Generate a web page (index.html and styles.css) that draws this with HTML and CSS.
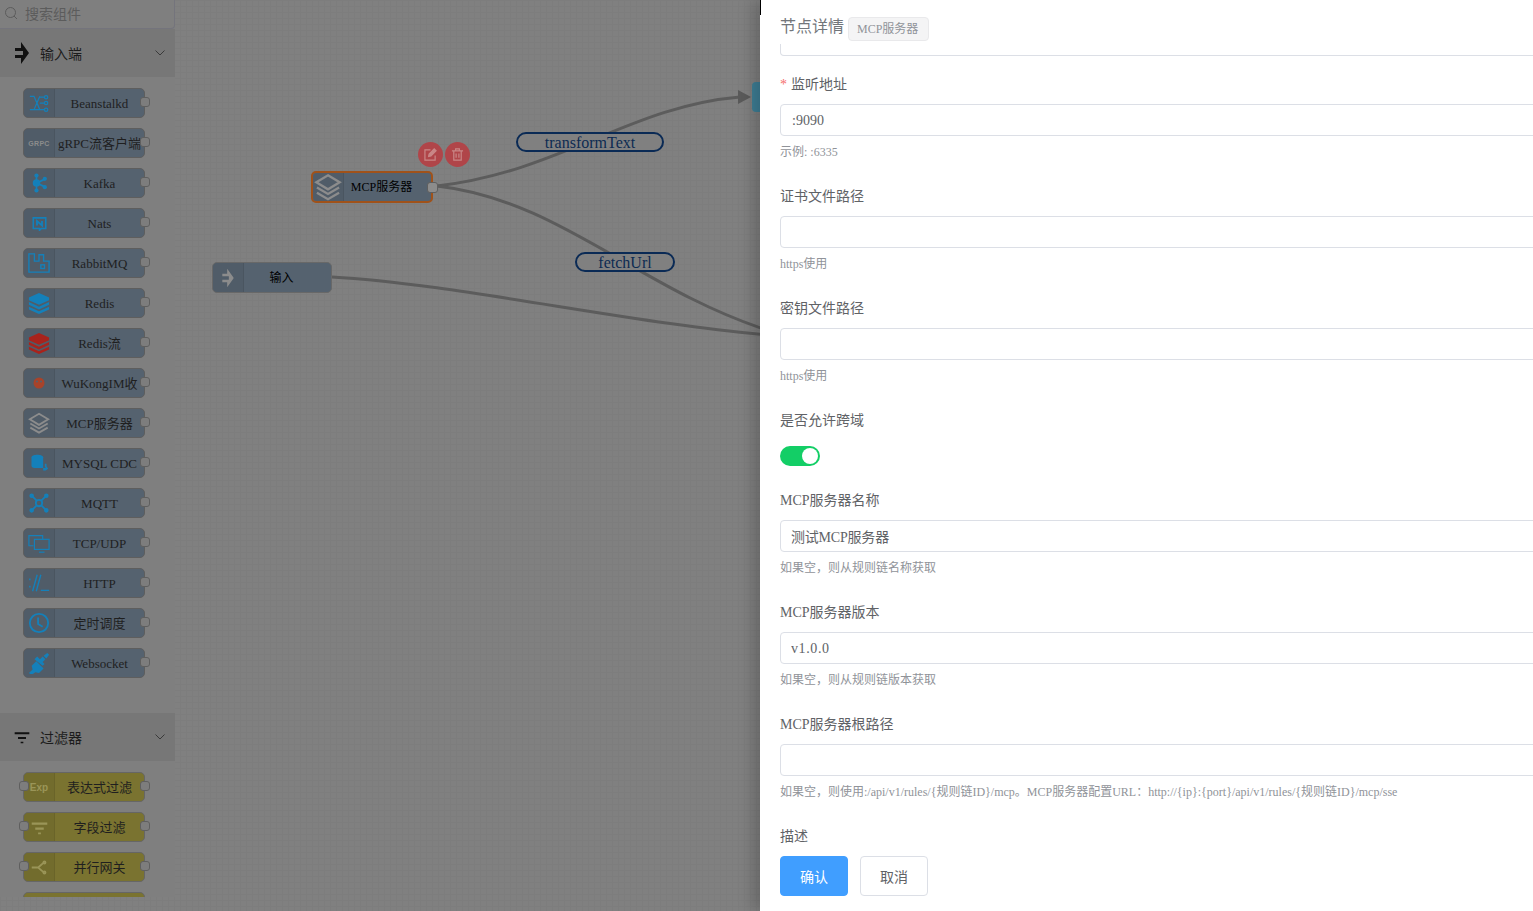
FILE: index.html
```html
<!DOCTYPE html>
<html lang="zh-CN">
<head>
  <meta charset="UTF-8" />
  <title>规则链编辑</title>
  <link rel="stylesheet" href="styles.css">
</head>
<body>
  <svg class="defs" width="0" height="0">
    <symbol id="i-stack" viewBox="0 0 24 24">
      <path d="M12 2 22 8 12 14 2 8Z" fill="none" stroke="currentColor" stroke-width="2"/>
      <path d="M2.500 12.500 12 18 21.500 12.500M2.500 17 12 22.500 21.500 17" fill="none" stroke="currentColor" stroke-width="2"/>
    </symbol>
    <symbol id="i-input" viewBox="0 0 14 24">
      <path d="M0 7h6V1l8 11-8 11v-6H0v-3h8v-4H0Z" fill="currentColor"/>
    </symbol>
    <symbol id="i-filter" viewBox="0 0 24 24">
      <path d="M1 5h22v3H1ZM6 12h12v3H6ZM10 19h4v2.500h-4Z" fill="currentColor"/>
    </symbol>
  </svg>

  <div class="stage">
    <aside class="sidebar">
      <div class="search">
        <svg width="14" height="14" viewBox="0 0 14 14"><circle cx="6.500" cy="6.500" r="5" fill="none" stroke="currentColor"/><path d="M10 10l3 3" stroke="currentColor"/></svg>
        <span>搜索组件</span>
      </div>

      <div class="group-head">
        <svg class="group-icon" viewBox="0 0 14 24"><use href="#i-input"/></svg>
        <span>输入端</span>
        <svg class="chevron" viewBox="0 0 10 6"><path d="M.5.500 5 5 9.500.500" fill="none" stroke="currentColor"/></svg>
      </div>
      <div class="group-list inputs">
        <div class="node"><div class="icon c-blue"><svg viewBox="0 0 24 24" fill="none" stroke="currentColor" stroke-width="1.500"><path d="M1 4h5l7 16H1M1 20h5l7-16M13 12h5M13 5h5M13 20h5"/><circle cx="20.500" cy="5" r="2"/><circle cx="20.500" cy="12" r="2"/><circle cx="20.500" cy="20" r="2"/></svg></div><div class="label">Beanstalkd</div><i class="port right"></i></div>
        <div class="node"><div class="icon c-grey"><b class="grpc">GRPC</b></div><div class="label">gRPC流客户端</div><i class="port right"></i></div>
        <div class="node"><div class="icon c-blue"><svg viewBox="0 0 24 24" fill="currentColor"><circle cx="9" cy="12" r="4.500"/><circle cx="9" cy="3" r="2.500"/><circle cx="9" cy="21" r="2.500"/><circle cx="19" cy="7" r="2.500"/><circle cx="19" cy="17" r="2.500"/><path d="M8 3h2v18H8ZM9 11l10-5 1 2-10 5ZM9 13l10 5 1-2-10-5Z"/></svg></div><div class="label">Kafka</div><i class="port right"></i></div>
        <div class="node"><div class="icon c-blue small-ish"><svg viewBox="0 0 24 24" fill="none" stroke="currentColor" stroke-width="2.500"><path d="M2 3h20v17h-7l-3 3v-3H2Z"/><path d="M8 15V8l8 7V8" stroke-width="3"/></svg></div><div class="label">Nats</div><i class="port right"></i></div>
        <div class="node"><div class="icon c-blue big"><svg viewBox="0 0 24 24" fill="none" stroke="currentColor" stroke-width="1.500"><path d="M1 22V2h6v8h5V3h5v7h6v12Z"/><rect x="14" y="14" width="4" height="4"/></svg></div><div class="label">RabbitMQ</div><i class="port right"></i></div>
        <div class="node"><div class="icon c-blue big"><svg viewBox="0 0 24 24" fill="currentColor"><path d="M12 1 23 6v3L12 14 1 9V6ZM1 11l11 5 11-5v3L12 19 1 14ZM1 16l11 5 11-5v3l-11 5L1 19Z"/></svg></div><div class="label">Redis</div><i class="port right"></i></div>
        <div class="node"><div class="icon c-red big"><svg viewBox="0 0 24 24" fill="currentColor"><path d="M12 1 23 6v3L12 14 1 9V6ZM1 11l11 5 11-5v3L12 19 1 14ZM1 16l11 5 11-5v3l-11 5L1 19Z"/></svg></div><div class="label">Redis流</div><i class="port right"></i></div>
        <div class="node"><div class="icon c-orange small"><svg viewBox="0 0 24 24"><circle cx="12" cy="12" r="11" fill="currentColor"/><circle cx="8" cy="9" r="2" fill="#55626f"/><circle cx="16" cy="9" r="2" fill="#55626f"/></svg></div><div class="label">WuKongIM收</div><i class="port right"></i></div>
        <div class="node"><div class="icon c-grey big"><svg viewBox="0 0 24 24"><use href="#i-stack"/></svg></div><div class="label">MCP服务器</div><i class="port right"></i></div>
        <div class="node"><div class="icon c-blue"><svg viewBox="0 0 24 24" fill="currentColor"><path d="M3 5c0-4 14-4 14 0v13H7c-3 0-4-1-4-3Z"/><path d="M17 18h3l-1-2v-3h2v3l2 3-3 2h-3Z"/></svg></div><div class="label">MYSQL CDC</div><i class="port right"></i></div>
        <div class="node"><div class="icon c-blue big"><svg viewBox="0 0 24 24" fill="none" stroke="currentColor" stroke-width="2"><circle cx="12" cy="12" r="3.500"/><path d="M4 4l5.500 5.500M20 4l-5.500 5.500M4 20l5.500-5.500M20 20l-5.500-5.500"/><circle cx="4" cy="4" r="1.500" fill="currentColor"/><circle cx="20" cy="4" r="1.500" fill="currentColor"/><circle cx="4" cy="20" r="1.500" fill="currentColor"/><circle cx="20" cy="20" r="1.500" fill="currentColor"/></svg></div><div class="label">MQTT</div><i class="port right"></i></div>
        <div class="node"><div class="icon c-blue big"><svg viewBox="0 0 24 24" fill="none" stroke="currentColor" stroke-width="1.300"><path d="M6 15H1V4h15v4"/><rect x="7" y="8" width="16" height="11"/><path d="M12 22h6"/></svg></div><div class="label">TCP/UDP</div><i class="port right"></i></div>
        <div class="node"><div class="icon c-blue big"><svg viewBox="0 0 24 24" fill="none" stroke="currentColor" stroke-width="1.500"><path d="M2 7v2M2 15v2M10 3 5 21M14 3 9 21M14 20h9"/></svg></div><div class="label">HTTP</div><i class="port right"></i></div>
        <div class="node"><div class="icon c-blue big"><svg viewBox="0 0 24 24" fill="none" stroke="currentColor" stroke-width="2"><circle cx="12" cy="12" r="10"/><path d="M11 6v7l5 3"/></svg></div><div class="label">定时调度</div><i class="port right"></i></div>
        <div class="node"><div class="icon c-blue big"><svg viewBox="0 0 24 24" fill="currentColor"><path d="M1 23l4-4-1-4 5-5 8 8-5 5-4-1-4 3ZM7 8l3-3 3 3 3-3 3 3-3 3 2 2-2 2-9-7Z"/><path d="M17 4l4-3 2 2-3 4Z"/></svg></div><div class="label">Websocket</div><i class="port right"></i></div>
      </div>

      <div class="group-head">
        <svg class="group-icon wide" viewBox="0 0 24 24"><use href="#i-filter"/></svg>
        <span>过滤器</span>
        <svg class="chevron" viewBox="0 0 10 6"><path d="M.5.500 5 5 9.500.500" fill="none" stroke="currentColor"/></svg>
      </div>
      <div class="group-list">
        <div class="node yellow"><i class="port left"></i><div class="icon c-pale"><b>Exp</b></div><div class="label">表达式过滤</div><i class="port right"></i></div>
        <div class="node yellow"><i class="port left"></i><div class="icon c-pale big"><svg viewBox="0 0 24 24"><use href="#i-filter"/></svg></div><div class="label">字段过滤</div><i class="port right"></i></div>
        <div class="node yellow"><i class="port left"></i><div class="icon c-pale big"><svg viewBox="0 0 24 24" fill="none" stroke="currentColor" stroke-width="2.500"><path d="M1 12h9l8-7M10 12l8 7"/><circle cx="19" cy="5" r="1.500"/><circle cx="19" cy="19" r="1.500"/></svg></div><div class="label">并行网关</div><i class="port right"></i></div>
        <div class="node yellow"></div>
      </div>
    </aside>

    <svg class="edges" width="800" height="911" viewBox="0 0 800 911">
      <g fill="none" stroke="#5c5c5c" stroke-width="3">
        <path d="M437 186C560 172 630 106 740 97"/>
        <path d="M437 186C560 200 640 290 770 331"/>
        <path d="M332 277C450 283 640 325 770 335"/>
      </g>
      <path d="M738 90 751 97 738 104Z" fill="#5a5a5a"/>
    </svg>

    <div class="edge-label label-transform">transformText</div>
    <div class="edge-label label-fetch">fetchUrl</div>

    <div class="actions">
      <span class="action"><svg width="13" height="13" viewBox="0 0 14 14" fill="none" stroke="currentColor" stroke-width="1.300"><path d="M12 8v5H1V2h6"/><path d="M5 9l.5-2.500L11 1l2 2-5.500 5.500Z" fill="currentColor"/></svg></span>
      <span class="action"><svg width="13" height="13" viewBox="0 0 14 14" fill="none" stroke="currentColor" stroke-width="1.300"><path d="M1 3h12M5 3V1h4v2M3 3v10h8V3M5.500 6v4.500M8.500 6v4.500"/></svg></span>
    </div>

    <div class="node canvas-node mcp"><div class="icon c-grey big"><svg viewBox="0 0 24 24"><use href="#i-stack"/></svg></div><div class="label">MCP服务器</div><i class="port right"></i></div>
    <div class="node canvas-node start"><div class="icon c-grey"><svg viewBox="0 0 14 24"><use href="#i-input"/></svg></div><div class="label">输入</div></div>
    <div class="canvas-node fragment"></div>
  </div>

  <section class="drawer">
    <i class="tick"></i>
    <header class="drawer-head">
      <span class="drawer-title">节点详情</span>
      <span class="tag">MCP服务器</span>
    </header>
    <form class="form">
      <div class="clipped-input"></div>

      <div class="item">
        <label class="required">监听地址</label>
        <input type="text" value=":9090">
        <p class="help">示例: :6335</p>
      </div>
      <div class="item">
        <label>证书文件路径</label>
        <input type="text">
        <p class="help">https使用</p>
      </div>
      <div class="item">
        <label>密钥文件路径</label>
        <input type="text">
        <p class="help">https使用</p>
      </div>
      <div class="item">
        <label>是否允许跨域</label>
        <div class="switch-row"><span class="switch"></span></div>
      </div>
      <div class="item">
        <label>MCP服务器名称</label>
        <input type="text" class="tight" value="测试MCP服务器">
        <p class="help">如果空，则从规则链名称获取</p>
      </div>
      <div class="item">
        <label>MCP服务器版本</label>
        <input type="text" class="loose" value="v1.0.0">
        <p class="help">如果空，则从规则链版本获取</p>
      </div>
      <div class="item">
        <label>MCP服务器根路径</label>
        <input type="text">
        <p class="help">如果空，则使用:/api/v1/rules/{规则链ID}/mcp。MCP服务器配置URL：http://{ip}:{port}/api/v1/rules/{规则链ID}/mcp/sse</p>
      </div>
      <div class="item last">
        <label>描述</label>
      </div>
      <div class="buttons">
        <button type="button" class="primary">确认</button>
        <button type="button">取消</button>
      </div>
    </form>
  </section>
</body>
</html>
```

FILE: styles.css
```css
* {
  box-sizing: border-box;
}
body {
  margin: 0;
  height: 911px;
  display: flex;
  overflow: hidden;
  background: #fff;
  font-family: "Liberation Serif", "Noto Sans CJK SC", serif;
}
.defs {
  position: absolute;
}

/* canvas side, already dimmed by the drawer's mask */
.stage {
  position: relative;
  flex: 0 0 760px;
  height: 911px;
  overflow: hidden;
  background-color: #808080;
  background-image:
    linear-gradient(#7d7d7d 1px, transparent 1px),
    linear-gradient(90deg, #7d7d7d 1px, transparent 1px);
  background-size: 6px 6px;
}
.sidebar {
  position: relative;
  z-index: 2;
  width: 175px;
  height: 897px;
  overflow: hidden;
  background: #7f7f7f;
}
.search {
  height: 29px;
  padding: 0 0 3px 4px;
  display: flex;
  align-items: center;
  gap: 7px;
  color: #5c5c5c;
  font-size: 14px;
  border: 1px solid #74747c;
  border-width: 0 1px 1px 0;
  border-radius: 0 0 4px 0;
}
.group-head {
  height: 48px;
  padding: 0 10px 0 15px;
  display: flex;
  align-items: center;
  background: #777;
  color: #1c1c1c;
  font-size: 14px;
}
.group-icon {
  width: 14px;
  height: 24px;
  margin-right: 11px;
  color: #111;
  flex: none;
}
.group-icon.wide {
  width: 16px;
  height: 16px;
  margin: 0 10px 0 -1px;
}
.chevron {
  width: 10px;
  height: 6px;
  margin-left: auto;
  color: #3a3a3a;
}
.group-list {
  padding: 11px 0 0 23px;
  display: flex;
  flex-direction: column;
  gap: 10px;
}
.group-list.inputs {
  padding-bottom: 35px;
}

/* nodes */
.node {
  position: relative;
  flex: none;
  width: 122px;
  height: 30px;
  display: flex;
  background: #55626f;
  border: 1px solid #5e5e5e;
  border-radius: 5px;
  color: #1f1f1f;
  font-size: 13px;
}
.node.yellow {
  background: #7a7330;
  border-color: #666;
}
.icon {
  flex: 0 0 31px;
  display: flex;
  align-items: center;
  justify-content: center;
  background: rgba(0, 0, 0, .06);
  border-right: 1px solid rgba(0, 0, 0, .08);
  border-radius: 4px 0 0 4px;
}
.icon svg {
  width: 20px;
  height: 20px;
}
.icon.big svg {
  width: 22px;
  height: 22px;
}
.yellow .icon.big svg {
  width: 17px;
  height: 17px;
}
.icon.small-ish svg {
  width: 15px;
  height: 15px;
}
.icon.small svg {
  width: 12px;
  height: 12px;
}
.icon b {
  font: bold 10px "Liberation Sans", sans-serif;
}
.icon .grpc {
  font-size: 7px;
  letter-spacing: .3px;
}
.c-blue { color: #1480ba; }
.c-grey { color: #8c8c8c; }
.c-red { color: #a8231c; }
.c-orange { color: #a8432a; }
.c-pale { color: #9a9558; }
.label {
  flex: 1;
  text-align: center;
  line-height: 30px;
  white-space: nowrap;
}
.port {
  position: absolute;
  top: 8px;
  width: 10px;
  height: 10px;
  background: #7d7d7d;
  border: 1px solid #5f5f5f;
  border-radius: 3px;
}
.port.right {
  right: -6px;
}
.port.left {
  left: -5px;
}

/* free canvas items */
.edges {
  position: absolute;
  top: 0;
  left: 0;
}
.canvas-node {
  position: absolute;
}
.mcp {
  left: 311px;
  top: 171px;
  height: 32px;
  color: #000;
  font-size: 12px;
  border: 2px solid #a0521a;
}
.mcp .icon svg {
  width: 28px;
  height: 28px;
}
.mcp .label {
  line-height: 29px;
  padding-right: 12px;
}
.mcp .port {
  top: 9px;
  right: -7px;
  width: 11px;
  height: 11px;
  background: #8c8c8c;
}
.start {
  left: 212px;
  top: 262px;
  width: 120px;
  height: 31px;
  color: #000;
  font-size: 12px;
  border-color: #686868;
}
.start .label {
  line-height: 30px;
  padding-right: 12px;
}
.fragment {
  left: 752px;
  top: 82px;
  width: 20px;
  height: 30px;
  background: #3e7f96;
  border-radius: 4px;
}
.edge-label {
  position: absolute;
  height: 20px;
  line-height: 18px;
  text-align: center;
  font-size: 16px;
  color: #0d2b52;
  background: #808080;
  border: 2px solid #0a2a55;
  border-radius: 10px;
}
.label-transform {
  left: 516px;
  top: 132px;
  width: 148px;
}
.label-fetch {
  left: 575px;
  top: 252px;
  width: 100px;
}
.actions {
  position: absolute;
  left: 418px;
  top: 142px;
  display: flex;
  gap: 2px;
}
.action {
  width: 25px;
  height: 25px;
  display: flex;
  align-items: center;
  justify-content: center;
  background: #b04549;
  border-radius: 50%;
  color: #c98686;
}

/* right drawer */
.drawer {
  position: relative;
  flex: 0 0 773px;
  height: 911px;
  overflow: hidden;
  background: #fff;
  box-shadow: -8px 0 14px rgba(0, 0, 0, .18);
  color: #606266;
}
.tick {
  position: absolute;
  left: 0;
  top: 0;
  width: 1px;
  height: 15px;
  background: #000;
}
.drawer-head {
  height: 44px;
  padding: 17px 0 0 20px;
  display: flex;
  align-items: flex-start;
  gap: 4px;
}
.drawer-title {
  font-size: 16px;
  line-height: 20px;
  color: #72767b;
}
.tag {
  height: 24px;
  padding: 0 10px 0 8px;
  line-height: 23px;
  font-size: 12px;
  color: #909399;
  background: #f4f4f5;
  border: 1px solid #e9e9eb;
  border-radius: 4px;
}
.form {
  width: 900px;
  padding-left: 20px;
}
.clipped-input {
  height: 12px;
  margin-bottom: 12px;
  border: 1px solid #dcdfe6;
  border-top: 0;
  border-radius: 0 0 4px 4px;
}
.item {
  margin-bottom: 12px;
}
.item.last {
  margin-bottom: 0;
}
.item label {
  display: block;
  height: 36px;
  line-height: 34px;
  font-size: 14px;
}
.required::before {
  content: "*";
  margin-right: 4px;
  color: #f56c6c;
}
.item input {
  display: block;
  width: 100%;
  height: 32px;
  padding: 1px 11px 0;
  font: inherit;
  font-size: 14px;
  color: #606266;
  background: #fff;
  border: 1px solid #dcdfe6;
  border-radius: 4px;
  outline: 0;
}
.item input.tight {
  padding: 0 10px;
  letter-spacing: -.2px;
}
.item input.loose {
  padding: 2px 10px 0;
  letter-spacing: .6px;
}
.help {
  margin: 0;
  height: 32px;
  line-height: 33px;
  font-size: 12px;
  color: #909399;
}
.switch-row {
  height: 32px;
  display: flex;
  align-items: center;
}
.switch {
  position: relative;
  width: 40px;
  height: 20px;
  background: #13ce66;
  border-radius: 10px;
}
.switch::after {
  content: "";
  position: absolute;
  top: 2px;
  right: 2px;
  width: 16px;
  height: 16px;
  background: #fff;
  border-radius: 50%;
}
.buttons {
  display: flex;
  gap: 12px;
}
.buttons button {
  width: 68px;
  height: 40px;
  font: inherit;
  font-size: 14px;
  color: #606266;
  background: #fff;
  border: 1px solid #dcdfe6;
  border-radius: 4px;
}
.buttons .primary {
  color: #fff;
  background: #409eff;
  border-color: #409eff;
}
```
